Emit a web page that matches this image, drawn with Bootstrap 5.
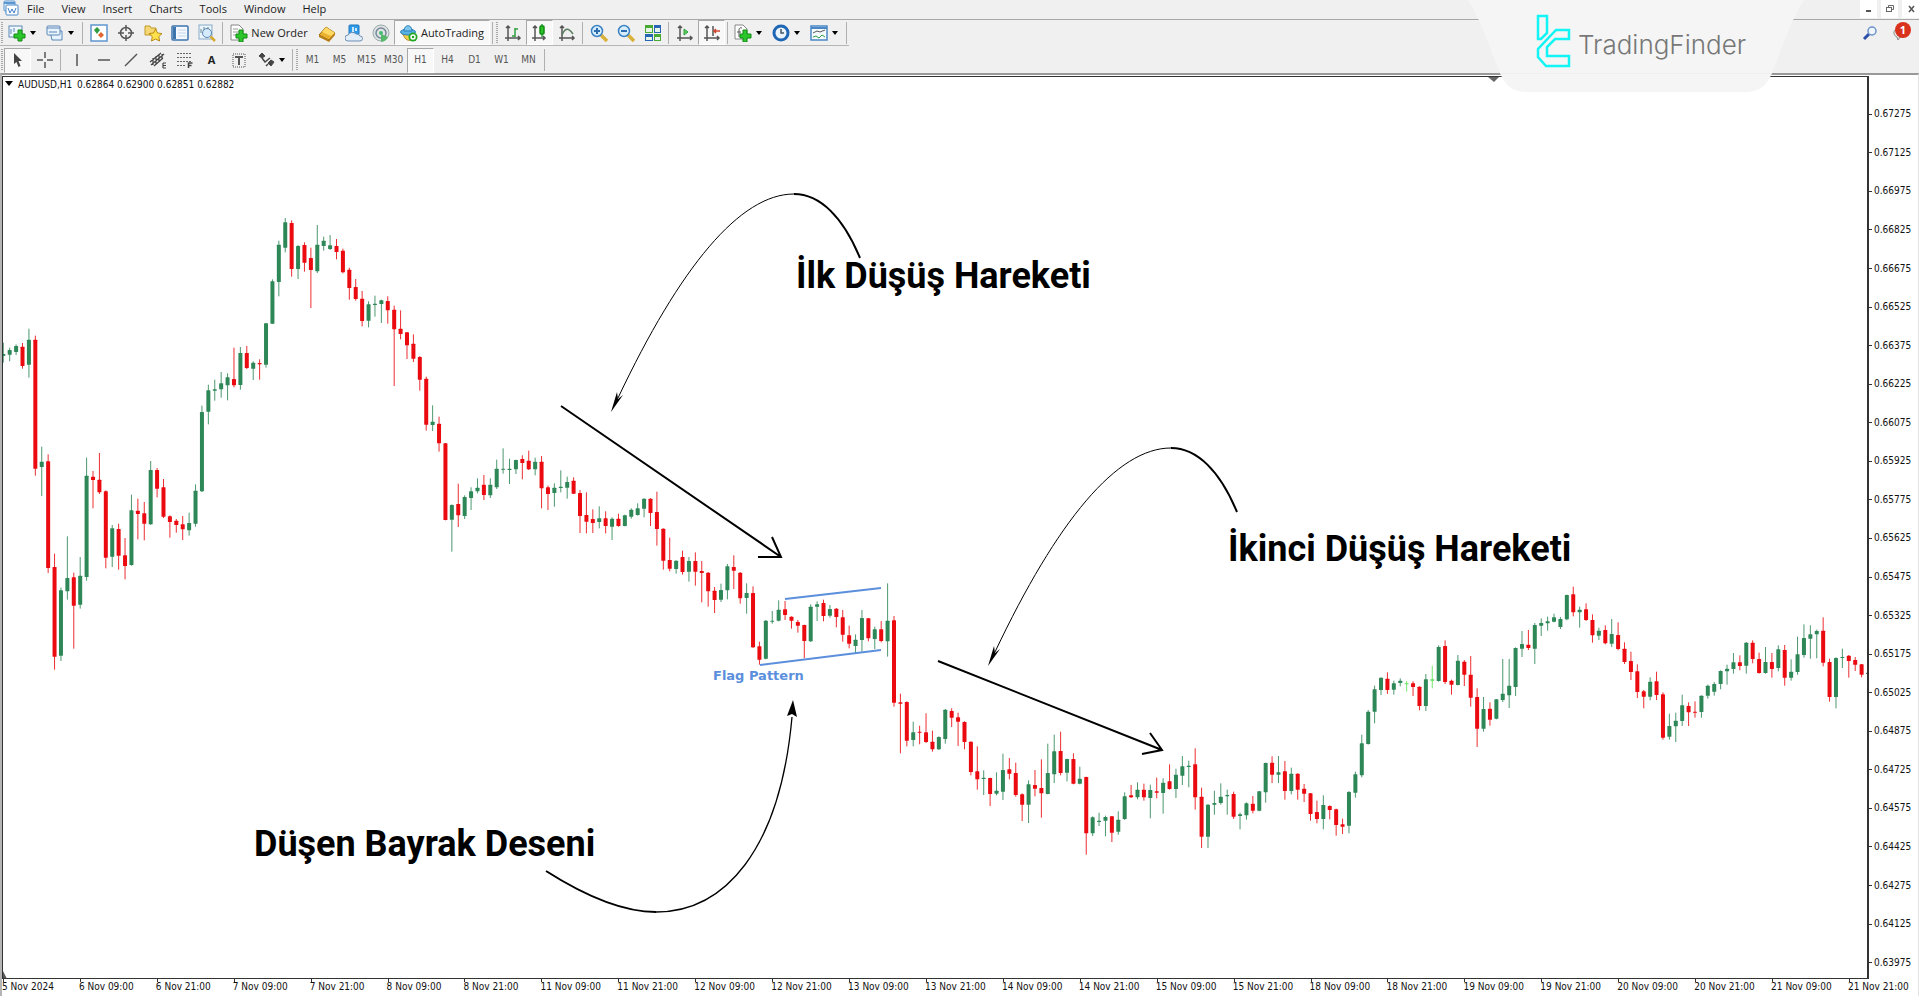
<!DOCTYPE html>
<html lang="tr">
<head>
<meta charset="utf-8">
<meta name="viewport" content="width=device-width, initial-scale=1">
<title>AUDUSD,H1</title>
<link rel="stylesheet" href="https://cdn.jsdelivr.net/npm/bootstrap@5.3.0/dist/css/bootstrap.min.css">
<style>
  body { background: #f0f0f0; color: #111; font-family: "Open Sans", "Noto Sans", sans-serif; font-size: 11px; line-height: 16px; overflow-x: hidden; }
  .menu-bar { height: 20px; padding-bottom: 2px; border-bottom: 1px solid #a8a8a8; }
  .menu-bar a { color: #1a1a1a; text-decoration: none; margin-left: 17px; }
  .menu-bar .app-icon { margin-left: 3px; margin-right: -10px; }
  .win-btn { width: 17px; height: 18px; padding: 0; border: 0; background: #fff; line-height: 0; }
  .tool-row { height: 26px; }
  .tool-row + .tool-row { height: 27px; padding-top: 1px; }
  .tool-row .group { border-bottom: 1px solid #b5b5b5; }
  .tool { width: 27px; height: 25px; padding: 0; border: 1px solid transparent; background: none; color: #222; display: flex; align-items: center; justify-content: center; flex: none; font-size: 11px; }
  .tool.drop { width: 38px; justify-content: flex-start; padding-left: 3px; gap: 4px; }
  .tool.drop::after { content: ""; border: 3px solid transparent; border-top: 4px solid #000; border-bottom: 0; }
  .tool.on { background: #f8f8f8; border-color: #a8a8a8 #fff #fff #a8a8a8; }
  .tool.order { width: 88px; gap: 3px; }
  .tool.auto { width: 96px; gap: 3px; }
  .tool.frame-btn { font-family: "DejaVu Sans Condensed", "DejaVu Sans", sans-serif; font-size: 10px; color: #555; }
  .divider { width: 5px; height: 22px; flex: none; background: linear-gradient(90deg, transparent 2px, #b0b0b0 2px 3px, transparent 3px); }
  .grip { width: 4px; height: 22px; flex: none; background: repeating-linear-gradient(#a8a8a8 0 1px, #f0f0f0 1px 2px) 1px 0 / 2px 100% no-repeat; }
  .tool-row svg { width: 18px; height: 18px; flex: none; }
  .brand-tab { position: absolute; top: 0; right: 115px; z-index: 3; }
  .notify { width: 28px; height: 24px; padding: 0; border: 0; background: none; position: relative; }
  .notify .count { position: absolute; top: 2px; right: 4px; width: 16px; height: 16px; border-radius: 8px; background: #d9321c; color: #fff; font-weight: 700; font-size: 11px; }
  .chart { background: #fff; border-top: 2px solid #999; border-left: 2px solid #b5b5b5; border-right: 1px solid #e4e4e4; font-family: "DejaVu Sans Condensed", "DejaVu Sans", sans-serif; font-size: 10px; }
  .plot { border: 1px solid #333; border-width: 1px 2px 1px 1px; margin-top: 1px; min-width: 0; }
  .plot svg { display: block; width: 100%; height: auto; }
  .prices { width: 49px; flex: none; padding: 20px 0 0; margin-bottom: -3px; }
  .prices div { flex: 1; display: flex; align-items: center; gap: 2px; }
  .prices div::before { content: ""; width: 3px; height: 1px; background: #333; }
  .times { display: grid; grid-template-columns: repeat(24, 1fr) 70px; height: 17px; }
  .times span { position: relative; white-space: nowrap; line-height: 16px; }
  .times span::before { content: ""; position: absolute; left: 1px; top: 0; width: 1px; height: 3px; background: #333; }
  .note { font: 700 36px Roboto, sans-serif; }
</style>
</head>
<body>

<nav class="menu-bar d-flex align-items-center">
  <svg class="app-icon" width="17" height="17" viewBox="0 0 17 17"><rect x="1" y="1" width="11" height="10" rx="1" fill="#e8f3fd" stroke="#5a96cf"/><path d="M1 3h11" stroke="#5a96cf" stroke-width="2"/><rect x="3" y="5" width="12" height="10" rx="1" fill="#fff" stroke="#4a88c6"/><path d="M5 8l2 5 2-4 2 4 2-5" fill="none" stroke="#3f7fc4"/></svg>
  <a href="#">File</a><a href="#">View</a><a href="#">Insert</a><a href="#">Charts</a><a href="#">Tools</a><a href="#">Window</a><a href="#">Help</a>
  <div class="ms-auto d-flex gap-1 align-self-start">
    <button class="win-btn" aria-label="Minimize"><svg width="12" height="12"><path d="M3 8h5" stroke="#555" stroke-width="2"/></svg></button>
    <button class="win-btn" aria-label="Restore"><svg width="12" height="12" fill="none" stroke="#666"><path d="M4.500 4V2.500h5v4H8"/><rect x="2.500" y="4.500" width="5" height="4"/></svg></button>
    <button class="win-btn" aria-label="Close"><svg width="12" height="12"><path d="M4 3l5 6M9 3L4 9" stroke="#555" stroke-width="1.500"/></svg></button>
  </div>
</nav>

<div class="tool-row d-flex align-items-start">
  <div class="group d-flex align-items-center">
    <span class="grip"></span>
    <button class="tool drop" aria-label="New chart"><svg viewBox="0 0 18 18"><rect x="1" y="2" width="13" height="11" fill="#eef6ff" stroke="#5b87b5"/><path d="M3 5v5M6 4v4" stroke="#5b87b5"/><path d="M10 6h4v4h3v4h-3v3h-4v-3H6v-4h4z" fill="#2bc62b" stroke="#128a12"/></svg></button>
    <button class="tool drop" aria-label="Profiles"><svg viewBox="0 0 18 18" fill="#e9f3fd" stroke="#5b87b5"><path d="M4 7h12v9H6z"/><rect x="1" y="2" width="13" height="9" rx="1"/><path d="M1 4h13M3 8h8"/></svg></button>
    <span class="divider"></span>
    <button class="tool" aria-label="Market watch"><svg viewBox="0 0 18 18"><rect x="1" y="1" width="16" height="16" fill="#fff" stroke="#5f97cf" stroke-width="1.500"/><path d="M7 3l3 3-3 4-3-4z" fill="#2f9e3f"/><path d="M11 8l3 3-3 3-3-3z" fill="#e0662f"/></svg></button>
    <button class="tool" aria-label="Data window"><svg viewBox="0 0 18 18" fill="none" stroke="#555" stroke-width="1.500"><circle cx="9" cy="9" r="5.500"/><path d="M9 1v6M9 11v6M1 9h6M11 9h6"/></svg></button>
    <button class="tool" aria-label="Navigator"><svg viewBox="0 0 18 18"><path d="M1 2h5l1 2h5v7H1z" fill="#f5d875" stroke="#c09a2c"/><path d="M11.500 5l2 4 4.500.6-3.200 3 .8 4.400-4.100-2-4 2 .8-4.400-3.300-3 4.500-.6z" fill="#ffe14d" stroke="#b98a12"/></svg></button>
    <button class="tool" aria-label="Terminal"><svg viewBox="0 0 18 18"><rect x="1" y="2" width="16" height="14" rx="1" fill="#f4f9ff" stroke="#3c74ae" stroke-width="1.500"/><path d="M2 3h3v12H2z" fill="#3c74ae"/><path d="M7 6h8M7 9h8M7 12h8" stroke="#c5d8ea"/></svg></button>
    <button class="tool" aria-label="Strategy tester"><svg viewBox="0 0 18 18"><rect x="1" y="1" width="13" height="14" fill="#eaf4fd" stroke="#88a9c8"/><path d="M3 9V5M6 7V3M10 6V3" stroke="#688"/><circle cx="9" cy="9" r="4.500" fill="#cfe8fa" fill-opacity=".8" stroke="#5b87b5"/><path d="M12.500 12.500L17 17" stroke="#d6a92f" stroke-width="2.500"/></svg></button>
    <span class="divider"></span>
    <button class="tool order"><svg viewBox="0 0 18 18"><path d="M1 1h8l4 4v11H1z" fill="#fff" stroke="#888"/><path d="M3 5h5M3 8h7M3 11h4" stroke="#999"/><path d="M9 6h4v4h4v4h-4v4H9v-4H6v-4h3z" fill="#2bc62b" stroke="#128a12"/></svg>New Order</button>
    <button class="tool" aria-label="MetaEditor"><svg viewBox="0 0 18 18"><path d="M1 11l7-8 9 6-6 7z" fill="#eab12e" stroke="#9b6a10"/><path d="M8 3l9 6-4 3-9-4z" fill="#ffd866"/><path d="M1 11v2l10 5 6-7V9l-6 7z" fill="#b87c14"/></svg></button>
    <button class="tool" aria-label="MetaTrader community"><svg viewBox="0 0 18 18"><rect x="4" y="1" width="10" height="10" rx="1" fill="#2d9be8" stroke="#1d76bd"/><path d="M8 3v5M11 4v3" stroke="#fff" stroke-width="1.500"/><path d="M3 17a3 3 0 0 1 0-6 5 5 0 0 1 8-1 4 4 0 0 1 4 2 2.500 2.500 0 0 1 0 5z" fill="#e3edf7" stroke="#6d8fb8"/></svg></button>
    <button class="tool" aria-label="Signals"><svg viewBox="0 0 18 18" fill="none"><circle cx="9" cy="9" r="8" fill="#dfe3e3" stroke="#9aa"/><circle cx="9" cy="9" r="5" stroke="#789" stroke-width="1.500"/><circle cx="9" cy="9" r="2" fill="#4b7"/><path d="M9 10v8a8 8 0 0 0 7-5z" fill="#55b76a"/></svg></button>
    <button class="tool auto on"><svg viewBox="0 0 18 18"><path d="M2 9c3 2 9 2 12 0l-3 7c-2 1-5 0-6-2z" fill="#f2cf4a" stroke="#b9922a"/><ellipse cx="8" cy="8" rx="7.500" ry="3" fill="#59b2e6" stroke="#2a7fb5"/><path d="M4 7c0-7 8-7 8 0z" fill="#7cc6ef" stroke="#2a7fb5"/><circle cx="13" cy="13" r="4.500" fill="#22a722"/><circle cx="13" cy="13" r="2" fill="none" stroke="#fff" stroke-width="1.500"/></svg>AutoTrading</button>
    <span class="divider"></span><span class="grip"></span>
    <button class="tool" aria-label="Bar chart"><svg viewBox="0 0 18 18" fill="none" stroke="#555" stroke-width="1.500"><path d="M4 2v15M1 14h15M2 4l2-2 2 2M14 12l2 2-2 2"/><path d="M8 12h3M11 13V4M11 5h3" stroke="#2f9e3f"/></svg></button>
    <button class="tool on" aria-label="Candlesticks"><svg viewBox="0 0 18 18" fill="none" stroke="#555" stroke-width="1.500"><path d="M4 2v15M1 14h13M2 4l2-2 2 2M12 12l2 2-2 2"/><path d="M11 0v13" stroke="#2f9e3f"/><rect x="9" y="2" width="4" height="8" rx="1" fill="#29c429" stroke="#128a12"/></svg></button>
    <button class="tool" aria-label="Line chart"><svg viewBox="0 0 18 18" fill="none" stroke="#555" stroke-width="1.500"><path d="M4 2v15M1 14h15M2 4l2-2 2 2M14 12l2 2-2 2"/><path d="M4 11c3-7 6-8 11-1" stroke="#577d5c"/></svg></button>
    <span class="divider"></span>
    <button class="tool" aria-label="Zoom in"><svg viewBox="0 0 18 18"><path d="M11 11l6 6" stroke="#d9b03a" stroke-width="3.500"/><circle cx="7" cy="7" r="5.500" fill="#d4ecfb" stroke="#3b82c4" stroke-width="1.500"/><path d="M4 7h6M7 4v6" stroke="#2b6cae" stroke-width="2"/></svg></button>
    <button class="tool" aria-label="Zoom out"><svg viewBox="0 0 18 18"><path d="M11 11l6 6" stroke="#d9b03a" stroke-width="3.500"/><circle cx="7" cy="7" r="5.500" fill="#d4ecfb" stroke="#3b82c4" stroke-width="1.500"/><path d="M4 7h6" stroke="#2b6cae" stroke-width="2"/></svg></button>
    <button class="tool" aria-label="Tile windows"><svg viewBox="0 0 18 18"><path d="M1 1h8v8H1zM10 10h7v7h-7z" fill="#49a832"/><path d="M10 1h7v8h-7zM1 10h8v7H1z" fill="#2864b4"/><path d="M2 4h6v4H2zM11 4h5v4h-5zM2 13h6v3H2zM11 13h5v3h-5z" fill="#e7f3e7"/></svg></button>
    <span class="divider"></span>
    <button class="tool" aria-label="Auto scroll"><svg viewBox="0 0 18 18" fill="none" stroke="#555" stroke-width="1.500"><path d="M4 2v15M1 14h15M2 4l2-2 2 2M14 12l2 2-2 2"/><path d="M8 5l4 3-4 3z" fill="#5fd05f" stroke="#2f9e3f" stroke-width="1"/></svg></button>
    <button class="tool on" aria-label="Chart shift"><svg viewBox="0 0 18 18" fill="none" stroke="#555" stroke-width="1.500"><path d="M4 2v15M1 14h15M2 4l2-2 2 2M14 12l2 2-2 2M10 2v10"/><path d="M17 7h-6M13 5l-2 2 2 2" stroke="#d0432c"/></svg></button>
    <span class="divider"></span>
    <button class="tool drop" aria-label="Indicators"><svg viewBox="0 0 18 18"><path d="M1 1h8l4 4v10H1z" fill="#fff" stroke="#888"/><path d="M8 4c-3-1-3 1-3 4v5M3 8h4" fill="none" stroke="#555"/><path d="M9 6h4v4h4v4h-4v4H9v-4H6v-4h3z" fill="#2bc62b" stroke="#128a12"/></svg></button>
    <button class="tool drop" aria-label="Periods"><svg viewBox="0 0 18 18"><circle cx="9" cy="9" r="7" fill="#e9f4fd" stroke="#1f66b5" stroke-width="3"/><path d="M9 5v4h3" fill="none" stroke="#456" stroke-width="1.500"/></svg></button>
    <button class="tool drop" aria-label="Templates"><svg viewBox="0 0 18 18" fill="none"><rect x="1" y="2" width="16" height="14" fill="#f6fbff" stroke="#4a88c6" stroke-width="1.500"/><path d="M1 4h16" stroke="#4a88c6" stroke-width="2"/><path d="M3 9l4-2 3 1 5-2" stroke="#555"/><path d="M3 13l3-1 3 2 3-3 3 2" stroke="#2f9e3f"/></svg></button>
    <span class="divider"></span>
  </div>
  <div class="ms-auto d-flex">
    <button class="tool" aria-label="Search"><svg viewBox="0 0 18 18"><path d="M8 10l-5 5" stroke="#2b4fa8" stroke-width="3"/><circle cx="11" cy="7" r="4" fill="#eef5fd" stroke="#6d93c8" stroke-width="1.500"/></svg></button>
    <button class="notify ms-1 me-1" aria-label="Notifications"><svg viewBox="0 0 18 18"><path d="M3 7h9v7H8l-2 3-1-3c-3-1-4-5-2-7z" fill="#eee" stroke="#888"/></svg><span class="count">1</span></button>
  </div>
</div>

<div class="tool-row d-flex align-items-center">
  <span class="grip"></span>
  <button class="tool on" aria-label="Cursor"><svg viewBox="0 0 18 18"><path d="M5 2l8 8H9.500l2 5-2 1-2-5L5 13z" fill="#444"/></svg></button>
  <button class="tool" aria-label="Crosshair"><svg viewBox="0 0 18 18" stroke="#555" stroke-width="1.500"><path d="M9 1v6M9 11v6M1 9h6M11 9h6"/></svg></button>
  <span class="divider"></span>
  <button class="tool" aria-label="Vertical line"><svg viewBox="0 0 18 18" stroke="#555" stroke-width="1.500"><path d="M9 3v12"/></svg></button>
  <button class="tool" aria-label="Horizontal line"><svg viewBox="0 0 18 18" stroke="#555" stroke-width="1.500"><path d="M3 9h12"/></svg></button>
  <button class="tool" aria-label="Trendline"><svg viewBox="0 0 18 18" stroke="#555" stroke-width="1.500"><path d="M3 15L15 3"/></svg></button>
  <button class="tool" aria-label="Equidistant channel"><svg viewBox="0 0 18 18" stroke="#444" fill="none" stroke-width="1.200"><path d="M1 11L12 2M2 14L15 3M5 15l9-8M4 7v7M7 5v8M10 3v8M13 3v5M14 12v5M14 12h3M14 14.500h3M14 17h3"/></svg></button>
  <button class="tool" aria-label="Fibonacci retracement"><svg viewBox="0 0 18 18" stroke="#666" fill="none"><path d="M1 2.500h14M1 6.500h14M1 10.500h14M1 14.500h8" stroke-dasharray="2 1"/><path d="M12.500 17v-5h4M12.500 14.500h3" stroke-width="1.500" stroke="#444"/></svg></button>
  <button class="tool fw-bold" aria-label="Text">A</button>
  <button class="tool" aria-label="Text label"><svg viewBox="0 0 18 18" fill="none" stroke="#555"><rect x="3" y="3" width="12" height="13" stroke-dasharray="1 1"/><path d="M5 6h8M9 6v8" stroke-width="2"/></svg></button>
  <button class="tool drop ps-1" aria-label="Arrows"><svg viewBox="0 0 18 18" fill="#444" stroke="#444"><path d="M2 5l3-3 3 3-3 2zM11 12l3-3 3 2-3 4z"/><path d="M5 7l3 4 5-4M11 13l-2 2" fill="none" stroke-width="1.500"/></svg></button>
  <span class="divider"></span><span class="grip"></span>
  <button class="tool frame-btn">M1</button><button class="tool frame-btn">M5</button><button class="tool frame-btn">M15</button><button class="tool frame-btn">M30</button><button class="tool frame-btn on">H1</button><button class="tool frame-btn">H4</button><button class="tool frame-btn">D1</button><button class="tool frame-btn">W1</button><button class="tool frame-btn">MN</button>
  <span class="divider"></span>
</div>

<svg class="brand-tab" width="336" height="92" viewBox="0 0 336 92" role="img" aria-label="TradingFinder">
  <path d="M0 0h336c-14 22-20 44-30 68-6 16-12 24-30 24H60C42 92 36 84 30 68 20 44 14 22 0 0z" fill="#f5f5f5"/>
  <path d="M32 73.500h272" stroke="#eee"/>
  <g fill="none" stroke="#13f5f5" stroke-width="2.500"><path d="M70 16h9v17l-6 6h-3z"/><path d="M101 30H88L70 49v8l8 9h23V56H79v-9l8-8h14z"/></g>
  <text x="110" y="54" font-family="Inter, sans-serif" font-weight="300" font-size="26" fill="#777">TradingFinder</text>
</svg>

<main class="chart">
  <div class="d-flex">
    <div class="plot flex-grow-1">
      <svg viewBox="3 76 1864 901">
        <path d="M5 80h8l-4 5z"/>
        <text x="18" y="87" font-size="10" fill="#111">AUDUSD,H1</text>
        <text x="77" y="87" font-size="10" fill="#111">0.62864 0.62900 0.62851 0.62882</text>
        <path d="M1488 76h11l-5 5z" fill="#666"/><path d="M3 970l4 8H3z" fill="#555"/>
        <g id="candles"></g>
        <g stroke="#5b8fdc" stroke-width="2"><path d="M785 598l96-11M760 664l121-15"/></g>
        <text x="713" y="679" font-family="DejaVu Sans" font-weight="700" font-size="13" fill="#5b8fdc">Flag Pattern</text>
        <g fill="none" stroke="#000" stroke-width="2">
          <path d="M561 405l220 151M772 536l9 20h-23"/>
          <path d="M938 660l224 89M1150 732l12 17-20 4"/>
          <path d="M546 870C590 898 625 911 656 911" />
          <path d="M656 911C724 911 780 850 792 716" stroke-width="1.300"/>
        </g>
        <path d="M793 699l4 17-5-3-5 2z"/>
        <g id="hook"><path d="M860 257C843 216 820 193 794 193" fill="none" stroke="#000" stroke-width="2"/><path d="M794 193C740 193 680 266 618 397" fill="none" stroke="#000"/><path d="M611 411l6-20 1 7 5-4z"/></g>
        <use href="#hook" x="377" y="254"/>
        <text class="note" x="796" y="287">İlk Düşüş Hareketi</text>
        <text class="note" x="1228" y="560">İkinci Düşüş Hareketi</text>
        <text class="note" x="254" y="855">Düşen Bayrak Deseni</text>
      </svg>
    </div>
    <div class="prices d-flex flex-column" id="prices"></div>
  </div>
  <div class="times" id="times"></div>
</main>

<script src="https://cdn.jsdelivr.net/npm/bootstrap@5.3.0/dist/js/bootstrap.bundle.min.js"></script>
<script>
  // Candles in thirds of a unit below each segment's base: colour, high, body top, body bottom, low
  const segments = [
    [200, "g425,459,465,485 g440,447,461,481 g430,435,453,462 r426,437,495,503 g383,416,491,530 r404,416,803,824 g737,782,798,885 r760,781,1101,1116 r1058,1098,1367,1406 g1160,1168,1364,1380 g1006,1131,1171,1196 r1115,1129,1214,1343 g1068,1124,1211,1223 g770,824,1128,1139 r810,827,837,922 r756,836,874,879 r868,871,1070,1102 g972,982,1067,1098 r968,984,1064,1106 r1011,1063,1095,1135 g881,928,1092,1094 r893,929,939,1015 r903,937,968,1018 g780,807,970,972 r801,807,863,889 r834,859,947,951 r943,946,963,1010 r954,959,972,995 r945,970,985,1017 g935,966,988,1004 g850,869,968,977 g614,633,871,873 g551,568,632,670 g536,565,569,599 g513,547,565,590 g517,529,553,598 r440,534,553,559 g438,456,552,566 r435,456,501,504 g481,485,503,537 r475,486,490,536 g366,367,491,500 g235,241,368,369 g119,131,243,286 g51,64,140,154 r58,66,204,227 g132,135,204,234 r124,132,185,212 r140,171,207,321 g72,131,211,216"],
    [220, "g47,59,75,89 g42,73,84,87 r54,75,93,115 r83,89,154,157 r140,146,201,236 r174,198,234,239 r210,233,300,316 g241,250,299,319 g224,248,252,287 g236,238,249,306 r226,240,268,308 r254,266,325,495 r268,323,339,355 r333,334,373,414 r340,368,413,423 r405,408,476,509 r467,473,611,629 g553,602,612,630 r587,608,667,692 r666,667,897,898 g850,852,896,992 r788,849,883,918 g823,828,885,894 g799,811,831,867 g772,800,811,817 r762,791,822,837 g772,791,823,831 g716,743,799,804 g682,743,746,758 g713,743,747,789 g716,717,745,759 r703,714,726,775 r689,719,745,747 g710,722,745,763 r705,722,802,862 r794,799,819,867 g787,800,816,857 g748,797,801,814 g767,783,800,833 r769,779,818,819 r807,816,885,936 r814,882,902,937 r865,894,906,936 g856,892,903,922 r871,892,915,937 g889,893,917,957 r878,893,915,917"],
    [420, "g281,283,315,316 g262,266,287,293 g247,262,282,284 g232,233,263,289 r232,233,276,315 r212,273,324,374 r322,323,419,446 r350,417,443,451 g418,419,444,458 r389,408,453,461 g408,420,452,482 r394,420,452,494 r420,450,456,544 r453,455,511,557 r498,509,537,576 g488,507,536,543 g429,436,508,535 r403,438,449,504 r453,455,532,548 g487,516,531,578 r496,516,679,681 r662,676,716,731 g597,599,713,715 g570,599,602,608 g538,566,599,601 r540,565,582,597 r586,587,599,623 r597,603,614,635 r611,612,660,712 g550,557,661,663 g541,550,557,600 r536,546,585,601 g552,564,584,590 r561,563,588,619 r567,589,641,662 r614,643,668,682 g640,656,675,698 g567,591,657,692 r591,592,652,661 g617,625,654,684 r600,625,660,664 g487,599,661,707 r585,598,845,857 r818,844,848,997 r841,843,959,976 g902,934,957,976"],
    [560, "r494,512,515,550 r457,514,543,546 r509,542,565,572 g526,528,565,567 g444,446,534,548 r442,450,470,498 r455,469,482,555 r481,483,543,565 r541,542,633,643 r556,631,655,686 g628,650,654,702 r650,651,699,735 g634,689,698,703 g578,627,692,717 r591,625,638,655 r605,636,702,707 r697,700,731,780 g658,670,731,786 r627,672,683,706 r595,681,697,770 g548,636,699,700 g521,571,640,666 r512,570,636,643 g593,594,635,661 r577,594,668,670 g617,653,668,670 r647,648,817,881 g766,769,817,825 g755,779,783,795 g764,768,779,826 r765,766,815,843 g751,776,812,821 g694,706,774,777 r672,703,709,711 g664,686,709,715 r668,686,709,719 g671,687,711,772 r650,691,695,712 g652,665,696,758 r610,661,684,686 g623,641,684,711 g585,616,644,672 g599,614,618,679 r562,610,709,746 r680,707,827,861 g729,731,827,861"],
    [600, "g569,606,611,641 g547,587,606,611 g566,582,586,641 r572,579,647,654 g635,640,645,685 g604,607,643,656 r585,608,629,637 g570,571,629,631 g485,486,574,605 r466,485,521,546 g465,514,521,546 r480,511,570,596 g500,518,570,580 r517,518,566,596 r549,563,578,603 r576,577,639,659 r599,633,654,667 g583,612,654,685 r613,615,627,655 r623,625,672,704 r653,670,677,699 g570,573,674,697 g512,520,575,590 g401,427,523,529 g327,332,429,431 g254,265,332,367 g229,230,267,282 r214,233,267,279 g239,247,266,281 g232,239,246,256 l240,247,250,272 r241,247,258,285 r256,257,315,328 g219,235,315,330 l194,235,239,262 g133,138,240,242 r118,135,243,249 r236,239,251,281 g162,179,252,253 r177,182,221,255 r165,221,290,317 r262,288,383,438 g288,324,383,392 r304,323,356,374 g294,295,353,355 g174,278,297,303 g174,254,283,321 g139,141,258,285 g90,129,143,168 r87,131,141,147 g66,72,143,189"],
    [560, "g172,186,194,225 g167,181,187,209 g158,169,182,184 g168,174,198,204 g101,102,175,178 r77,100,154,166 g137,146,154,200 r127,145,177,180 r160,177,223,245 g200,209,224,237 r193,207,247,250 g174,219,248,258 r184,222,264,268 r244,263,303,309 r272,300,333,357 r310,331,393,411 r387,391,407,442 g349,362,407,418 r332,361,402,417 r394,400,530,536 g458,495,527,536 g455,479,496,543 g401,433,480,495 r424,435,454,495 r421,452,455,470 g403,404,453,470 g371,374,404,413 g363,369,392,404 g328,330,369,385 g311,323,331,371 g276,304,324,338 r283,304,315,328 g243,245,314,338 r238,245,294,307 r275,294,336,338 g258,303,336,338 r276,303,324,350 g253,265,321,331 r252,267,350,374 g295,332,350,359 g227,280,333,341 g190,231,282,290 g193,220,233,293 g206,210,220,292 r169,209,305,316 r293,303,408,422 g289,291,408,442 g263,288,291,321 r282,284,300,350 r288,297,311,330 r309,310,341,349 g318,335,339,364"]
  ];
  const paint = { g: '#2e8757', r: '#ea0a0f', l: '#5fe05a' };
  let shapes = '', index = -1;
  for (const [base, rows] of segments) {
    for (const row of rows.split(' ')) {
      const [high, top, bottom, low] = row.slice(1).split(',').map(v => base + v / 3);
      const x = 9.7 + 6.408 * index++, c = paint[row[0]];
      shapes += `<path d="M${x} ${high}V${low}" stroke="${c}" opacity=".85"/><rect x="${x - 2}" y="${top}" width="4" height="${Math.max(bottom - top, 1)}" rx="0.5" fill="${c}"/>`;
    }
  }
  document.getElementById('candles').innerHTML = shapes;

  let prices = '';
  for (let p = 67275; p >= 63975; p -= 150) prices += `<div>0.${p}</div>`;
  document.getElementById('prices').innerHTML = prices;

  const days = ['6', '7', '8', '11', '12', '13', '14', '15', '18', '19', '20', '21'];
  const times = ['5 Nov 2024', ...days.flatMap(d => [`${d} Nov 09:00`, `${d} Nov 21:00`])];
  document.getElementById('times').innerHTML = times.map(t => `<span>${t}</span>`).join('');
</script>
</body>
</html>
